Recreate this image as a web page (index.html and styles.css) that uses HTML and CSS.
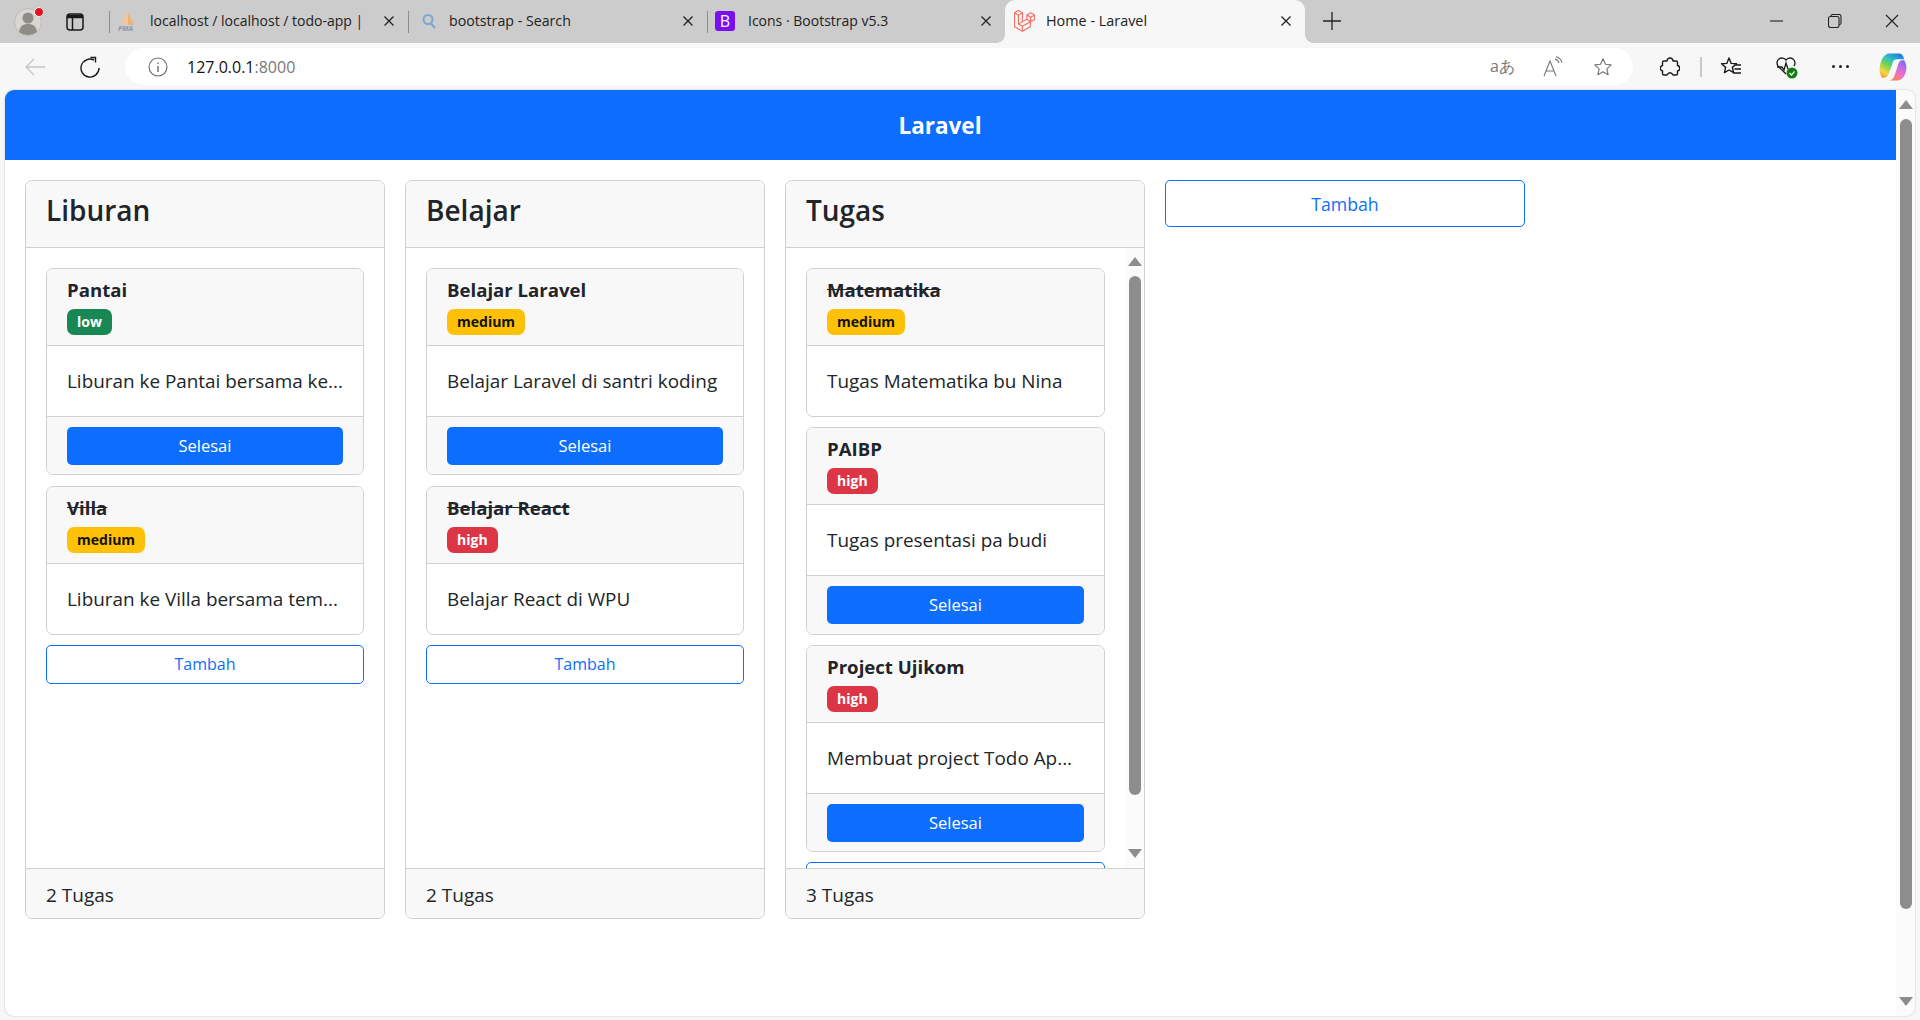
FILE: index.html
```html
<!DOCTYPE html>
<html lang="en">

<head>
  <meta charset="UTF-8" />
  <title>Home - Laravel</title>
  <link rel="stylesheet" href="styles.css">
</head>

<body>
  <div class="tabstrip">
    <div class="profile">
      <svg width="34" height="34" viewBox="0 0 34 34">
        <circle cx="16" cy="17" r="13.500" fill="#d8d6d2" stroke="#bdbbb8" />
        <circle cx="16" cy="13" r="5.500" fill="#8f8c88" />
        <path d="M7 27c1-6 4-8 9-8s8 2 9 8c-5 4-13 4-18 0z" fill="#8f8c88" />
        <circle cx="27" cy="7" r="4.500" fill="#e8101c" stroke="#f2f2f2" />
      </svg>
    </div>
    <div class="tabs-btn">
      <svg width="18" height="18" viewBox="0 0 18 18" fill="none" stroke="#1a1a1a" stroke-width="1.500">
        <rect x="1" y="1" width="16" height="16" rx="3" />
        <path d="M1 3.500h16" stroke-width="3.500" />
        <path d="M6.500 5v12" />
      </svg>
    </div>
    <div class="sep sep-first"></div>
    <div class="tab tab-pma">
      <svg class="favicon" width="20" height="22" viewBox="0 0 20 22">
        <path d="M3 15L9 2l1 13z" fill="#f2c79b" />
        <path d="M10 15V2l6 13z" fill="#f0b27a" />
        <text x="0" y="21" class="pma-mark">PMA</text>
      </svg>
      <span class="tab-title">localhost / localhost / todo-app |</span>
      <svg class="close" width="12" height="12" viewBox="0 0 12 12"><path d="M1.500 1.500l9 9M10.500 1.500l-9 9" stroke="#222" stroke-width="1.300" /></svg>
    </div>
    <div class="sep"></div>
    <div class="tab tab-search">
      <svg class="favicon" width="16" height="16" viewBox="0 0 16 16" fill="none" stroke="#7aa6d6" stroke-width="2">
        <circle cx="7" cy="6.500" r="4.500" />
        <path d="M10 10.500l4 4.500" />
      </svg>
      <span class="tab-title">bootstrap - Search</span>
      <svg class="close" width="12" height="12" viewBox="0 0 12 12"><path d="M1.500 1.500l9 9M10.500 1.500l-9 9" stroke="#222" stroke-width="1.300" /></svg>
    </div>
    <div class="sep"></div>
    <div class="tab tab-icons">
      <span class="bs-icon">B</span>
      <span class="tab-title">Icons · Bootstrap v5.3</span>
      <svg class="close" width="12" height="12" viewBox="0 0 12 12"><path d="M1.500 1.500l9 9M10.500 1.500l-9 9" stroke="#222" stroke-width="1.300" /></svg>
    </div>
    <div class="tab tab-active">
      <svg class="favicon" width="21" height="22" viewBox="0 0 50 52" fill="none" stroke="#f56b60" stroke-width="2.600" stroke-linejoin="round">
        <path d="M1 6.500L10.500 1 20 6.500 10.500 12zM1 6.500v33l18.800 10.800L39 39.500V28" />
        <path d="M10.500 12v21l9.300 5.600L39 28l10-5.700V11.500L39.800 6l-9.200 5.500v10.800l9.200 5.400M30.600 11.500l9.200 5.500L49 11.500M39.800 17v10.700" />
        <path d="M20 6.500v21l10.600-5.500M19.800 38.600v11.700M10.500 33L20 27.500" />
      </svg>
      <span class="tab-title">Home - Laravel</span>
      <svg class="close" width="12" height="12" viewBox="0 0 12 12"><path d="M1.500 1.500l9 9M10.500 1.500l-9 9" stroke="#222" stroke-width="1.300" /></svg>
    </div>
    <div class="new-tab">
      <svg width="18" height="18" viewBox="0 0 18 18"><path d="M9 0v18M0 9h18" stroke="#222" stroke-width="1.300" /></svg>
    </div>
    <div class="window-btns">
      <svg width="14" height="14" viewBox="0 0 14 14"><path d="M0 7h13" stroke="#222" stroke-width="1.100" /></svg>
      <svg width="14" height="14" viewBox="0 0 14 14" fill="none" stroke="#222" stroke-width="1.100"><rect x="0.500" y="2.500" width="10.500" height="11" rx="2" /><path d="M3 2.500v-.5A1.500 1.500 0 0 1 4.500.5H11a2 2 0 0 1 2 2V9a1.500 1.500 0 0 1-1.500 1.500H11" /></svg>
      <svg width="14" height="14" viewBox="0 0 14 14"><path d="M1 1l12 12M13 1L1 13" stroke="#222" stroke-width="1.100" /></svg>
    </div>
  </div>

  <div class="toolbar">
    <svg class="tool-back" width="22" height="20" viewBox="0 0 22 20" fill="none" stroke="#c4c4c4" stroke-width="1.300"><path d="M21 10H2M10 2l-8 8 8 8" /></svg>
    <svg class="tool-reload" width="20" height="22" viewBox="0 0 20 22" fill="none" stroke="#1a1a1a" stroke-width="1.400"><path d="M14 4A9 9 0 1 0 19 12" /><path d="M10.500 1.500H15.500V6.500" /></svg>
    <div class="addressbar">
      <svg width="20" height="20" viewBox="0 0 20 20" fill="none" stroke="#6b6b6b" stroke-width="1.100"><circle cx="10" cy="10" r="9" /><path d="M10 9v6M10 5.500V7" stroke-width="1.400" /></svg>
      <div class="url">127.0.0.1<span class="url-port">:8000</span></div>
      <div class="addr-icons">
        <span class="translate">aあ</span>
        <svg width="20" height="22" viewBox="0 0 20 22" fill="none" stroke="#777" stroke-width="1.100"><path d="M1 20L7 5l6 15M3.500 15h7M12 3c2 .5 3.500 2 4 4M13 .8c3 .7 5 2.700 6 5.700" /></svg>
        <svg width="20" height="22" viewBox="0 0 22 22" fill="none" stroke="#777" stroke-width="1.300"><path d="M11 2l2.700 6 6.300.7-4.700 4.300 1.300 6.500L11 16.200 5.400 19.500 6.700 13 2 8.700 8.300 8z" stroke-linejoin="round" /></svg>
      </div>
    </div>
    <div class="tool-right">
      <svg class="ext" width="20" height="22" viewBox="0 0 20 22" fill="none" stroke="#1a1a1a" stroke-width="1.400"><path d="M7 5c.5-4 5.500-4 6 0h3a1.500 1.500 0 0 1 1.500 1.500V9.500c3 .5 3 5 0 5.500v2.500A1.500 1.500 0 0 1 16 19h-3c-1.500-3-4.500-3-6 0H4a1.500 1.500 0 0 1-1.500-1.500V15c-3-1-3-4.500 0-5.500V6.500A1.500 1.500 0 0 1 4 5z" stroke-linejoin="round" /></svg>
      <div class="tool-sep"></div>
      <svg class="favs" width="22" height="22" viewBox="0 0 22 22" fill="none" stroke="#1a1a1a" stroke-width="1.400"><path d="M9 2l2.200 5.400 5.300.4-4.100 3.600 1.200 5.300L9 14l-4.600 2.700 1.200-5.300L1.500 7.800l5.300-.4zM15 9h6M14.500 13H21M13 17h8" stroke-linejoin="round" /></svg>
      <svg class="health" width="24" height="24" viewBox="0 0 24 24" fill="none" stroke="#1a1a1a" stroke-width="1.300">
        <path d="M11 19l-8-8a5 5 0 0 1 8-6 5 5 0 0 1 8 6" />
        <path d="M2 12h5l2 3 2-7 2 6" />
        <circle cx="17" cy="18" r="5.500" fill="#107c10" stroke="none" />
        <path d="M14.500 18l2 2 3-3.500" stroke="#fff" stroke-width="1.300" />
      </svg>
      <div class="dots"><i></i><i></i><i></i></div>
      <svg class="copilot" width="29" height="30" viewBox="0 0 30 30">
        <defs>
          <linearGradient id="cpLeft" x1="0.800" y1="0" x2="0.200" y2="1">
            <stop offset="0" stop-color="#1e78e8" />
            <stop offset="0.350" stop-color="#2fc4c0" />
            <stop offset="0.550" stop-color="#6cd25a" />
            <stop offset="0.850" stop-color="#f8d93a" />
            <stop offset="1" stop-color="#f59a3c" />
          </linearGradient>
          <linearGradient id="cpRight" x1="0.800" y1="0" x2="0.200" y2="1">
            <stop offset="0" stop-color="#7a6cf0" />
            <stop offset="0.400" stop-color="#d66be0" />
            <stop offset="0.700" stop-color="#f47aa8" />
            <stop offset="1" stop-color="#f5803c" />
          </linearGradient>
        </defs>
        <path d="M11 1h10c2 0 3 1 4 3l1 3h-7c-3 0-4 1-5 4l-4 11c-1 3-3 4-5 4H3C1 22 0 18 1 14 2 8 5 1 11 1z" fill="url(#cpLeft)" />
        <path d="M24 8h2c2 3 3 7 2 11-1 5-4 10-9 10h-9c3 0 5-2 6-5l4-12c.5-2 2-4 4-4z" fill="url(#cpRight)" />
      </svg>
    </div>
  </div>

  <div class="viewport">
    <div class="page">
      <div class="navbar">Laravel</div>
      <div class="board">

        <div class="column">
          <div class="column-head">Liburan</div>
          <div class="column-body">
            <div class="task">
              <div class="task-head">
                <div class="task-title">Pantai</div>
                <span class="badge badge-low">low</span>
              </div>
              <div class="task-body">Liburan ke Pantai bersama ke...</div>
              <div class="task-foot"><div class="btn-done">Selesai</div></div>
            </div>
            <div class="task">
              <div class="task-head">
                <div class="task-title done">Villa</div>
                <span class="badge badge-medium">medium</span>
              </div>
              <div class="task-body">Liburan ke Villa bersama tem...</div>
            </div>
            <div class="btn-add">Tambah</div>
          </div>
          <div class="column-foot">2 Tugas</div>
        </div>

        <div class="column">
          <div class="column-head">Belajar</div>
          <div class="column-body">
            <div class="task">
              <div class="task-head">
                <div class="task-title">Belajar Laravel</div>
                <span class="badge badge-medium">medium</span>
              </div>
              <div class="task-body">Belajar Laravel di santri koding</div>
              <div class="task-foot"><div class="btn-done">Selesai</div></div>
            </div>
            <div class="task">
              <div class="task-head">
                <div class="task-title done">Belajar React</div>
                <span class="badge badge-high">high</span>
              </div>
              <div class="task-body">Belajar React di WPU</div>
            </div>
            <div class="btn-add">Tambah</div>
          </div>
          <div class="column-foot">2 Tugas</div>
        </div>

        <div class="column">
          <div class="column-head">Tugas</div>
          <div class="column-scroll">
            <div class="column-body">
              <div class="task">
                <div class="task-head">
                  <div class="task-title done">Matematika</div>
                  <span class="badge badge-medium">medium</span>
                </div>
                <div class="task-body">Tugas Matematika bu Nina</div>
              </div>
              <div class="task">
                <div class="task-head">
                  <div class="task-title">PAIBP</div>
                  <span class="badge badge-high">high</span>
                </div>
                <div class="task-body">Tugas presentasi pa budi</div>
                <div class="task-foot"><div class="btn-done">Selesai</div></div>
              </div>
              <div class="task">
                <div class="task-head">
                  <div class="task-title">Project Ujikom</div>
                  <span class="badge badge-high">high</span>
                </div>
                <div class="task-body">Membuat project Todo Ap...</div>
                <div class="task-foot"><div class="btn-done">Selesai</div></div>
              </div>
              <div class="btn-add btn-add-clipped"></div>
            </div>
            <div class="scrollbar scrollbar-inner">
              <i class="arrow-up"></i>
              <div class="thumb-track"><div class="thumb"></div></div>
              <i class="arrow-down"></i>
            </div>
          </div>
          <div class="column-foot">3 Tugas</div>
        </div>

        <div class="btn-add btn-add-column">Tambah</div>
      </div>
    </div>
    <div class="scrollbar scrollbar-page">
      <i class="arrow-up"></i>
      <div class="thumb-track"><div class="thumb"></div></div>
      <i class="arrow-down"></i>
    </div>
  </div>
</body>

</html>
```

FILE: styles.css
```css
* {
  box-sizing: border-box;
}

html,
body {
  height: 100%;
}

body {
  margin: 0;
  height: 1020px;
  overflow: hidden;
  display: flex;
  flex-direction: column;
  background-color: #f7f7f7;
  color: #212529;
  font-family: "Open Sans", "Noto Sans", sans-serif;
}

/* Browser tabs */
.tabstrip {
  height: 43px;
  flex-shrink: 0;
  display: flex;
  align-items: center;
  background-color: #cccccc;
  font-size: 14px;
  color: #222;
}

.profile {
  width: 34px;
  margin-left: 12px;
  display: flex;
}

.tabs-btn {
  width: 18px;
  margin-left: 20px;
  display: flex;
}

.sep {
  width: 1px;
  height: 22px;
  background-color: #8e8e8e;
}

.sep-first {
  margin-left: 25px;
}

.tab {
  height: 43px;
  display: flex;
  align-items: center;
  padding: 0 13px 2px 8px;
}

.tab-pma,
.tab-search {
  width: 298px;
}

.tab-search {
  padding-left: 12px;
}

.tab-icons {
  width: 297px;
  padding-left: 7px;
}

.tab-active {
  position: relative;
  width: 300px;
  background-color: #f7f7f7;
  border-radius: 10px 10px 0 0;
  padding-left: 9px;
}

/* concave corners at the foot of the active tab */
.tab-active::before,
.tab-active::after {
  content: "";
  position: absolute;
  bottom: 0;
  width: 8px;
  height: 8px;
}

.tab-active::before {
  left: -8px;
  background: radial-gradient(circle at 0 0, transparent 7.5px, #f7f7f7 8px);
}

.tab-active::after {
  right: -8px;
  background: radial-gradient(circle at 100% 0, transparent 7.5px, #f7f7f7 8px);
}

.favicon {
  flex-shrink: 0;
}

.pma-mark {
  font-size: 7px;
  font-style: italic;
  font-weight: bold;
  fill: #8a93b5;
}

.bs-icon {
  width: 20px;
  height: 20px;
  flex-shrink: 0;
  border-radius: 3px;
  background-color: #7a10f0;
  color: #fff;
  font-size: 16px;
  line-height: 20px;
  text-align: center;
}

.tab-title {
  flex: 1;
  margin-left: 12px;
  white-space: nowrap;
  overflow: hidden;
}

.tab-search .tab-title {
  font-size: 14.200px;
}

.tab-icons .tab-title {
  margin-left: 13px;
}

.tab-active .tab-title {
  margin-left: 11px;
  font-size: 14.400px;
}

.close {
  margin-left: 12px;
  flex-shrink: 0;
}

.new-tab {
  margin-left: 18px;
  padding-bottom: 2px;
  display: flex;
}

.window-btns {
  margin-left: auto;
  width: 150px;
  padding-right: 21px;
  padding-bottom: 2px;
  display: flex;
  justify-content: space-between;
}

/* Browser toolbar */
.toolbar {
  height: 47px;
  flex-shrink: 0;
  display: flex;
  align-items: center;
}

.tool-back {
  margin-left: 24px;
}

.tool-reload {
  margin-left: 34px;
}

.addressbar {
  width: 1508px;
  height: 37px;
  margin-left: 25px;
  padding: 0 20px 0 23px;
  background-color: #fff;
  border-radius: 19px;
  display: flex;
  align-items: center;
}

.url {
  margin-left: 19px;
  font-size: 16px;
  color: #111;
}

.url-port {
  color: #777;
}

.addr-icons {
  margin-left: auto;
  display: flex;
  align-items: center;
  gap: 30px;
}

.translate {
  margin-right: -2px;
  font-size: 16px;
  color: #777;
}

.tool-right {
  display: flex;
  align-items: center;
  margin-left: 27px;
}

.tool-sep {
  width: 2px;
  height: 20px;
  margin-left: 20px;
  background-color: #c8c8c8;
}

.favs {
  margin-left: 18px;
}

.health {
  margin-left: 33px;
}

.dots {
  margin-left: 33px;
  display: flex;
  gap: 4px;
}

.dots i {
  width: 3px;
  height: 3px;
  border-radius: 50%;
  background-color: #222;
}

.copilot {
  margin-left: 30px;
}

/* Page in the window */
.viewport {
  height: 926px;
  margin: 0 5px;
  background-color: #fff;
  border-radius: 9px;
  box-shadow: 0 0 2px rgba(0, 0, 0, 0.25);
  display: flex;
  overflow: hidden;
}

.page {
  flex: 1;
  overflow: hidden;
}

.navbar {
  height: 70px;
  padding-right: 21px;
  background-color: #0d6efd;
  color: #fff;
  font-size: 22.500px;
  font-weight: 700;
  line-height: 72px;
  text-align: center;
}

.board {
  display: flex;
  align-items: flex-start;
  gap: 20px;
  padding: 20px;
}

.column {
  width: 360px;
  height: 739px;
  display: flex;
  flex-direction: column;
  border: 1px solid #d0d0d0;
  border-radius: 7px;
  overflow: hidden;
}

.column-head {
  height: 67px;
  flex-shrink: 0;
  padding-left: 20px;
  background-color: #f8f8f8;
  border-bottom: 1px solid #d0d0d0;
  font-size: 28px;
  font-weight: 600;
  line-height: 59px;
}

.column-body {
  flex: 1;
  min-width: 0;
  display: flex;
  flex-direction: column;
  gap: 10.200px;
  padding: 20px;
  overflow: hidden;
}

.column-scroll {
  flex: 1;
  display: flex;
  min-height: 0;
}

.column-foot {
  height: 50px;
  flex-shrink: 0;
  padding-left: 20px;
  background-color: #f8f8f8;
  border-top: 1px solid #d0d0d0;
  font-size: 19px;
  line-height: 52px;
}

.task {
  flex-shrink: 0;
  border: 1px solid #d0d0d0;
  border-radius: 7px;
  overflow: hidden;
}

.task-head {
  height: 77px;
  padding: 6px 20px 0;
  background-color: #f8f8f8;
  border-bottom: 1px solid #d0d0d0;
}

.task-title {
  height: 30px;
  font-size: 18.600px;
  font-weight: 700;
  line-height: 29px;
}

.task-title.done {
  text-decoration: line-through;
}

.badge {
  display: inline-block;
  height: 26px;
  padding: 0 10px;
  border-radius: 7px;
  margin-top: 4px;
  font-size: 14px;
  font-weight: 700;
  line-height: 26px;
  vertical-align: top;
}

.badge-low {
  background-color: #198754;
  color: #fff;
}

.badge-medium {
  background-color: #ffc107;
  color: #111;
}

.badge-high {
  background-color: #dc3545;
  color: #fff;
}

.task-body {
  height: 70px;
  padding-left: 20px;
  font-size: 18.900px;
  line-height: 71px;
  white-space: nowrap;
  overflow: hidden;
}

.task-foot {
  height: 58.400px;
  padding: 10px 20px 9px;
  background-color: #f8f8f8;
  border-top: 1px solid #d0d0d0;
}

.btn-done {
  height: 38px;
  border-radius: 5px;
  background-color: #0d6efd;
  color: #fff;
  font-size: 16.500px;
  line-height: 38px;
  text-align: center;
}

.btn-add {
  flex-shrink: 0;
  height: 39px;
  border: 1px solid #0d6efd;
  border-radius: 5px;
  background-color: #fff;
  color: #0d6efd;
  font-size: 16px;
  line-height: 37px;
  text-align: center;
}

.btn-add-column {
  width: 360px;
  height: 47px;
  font-size: 17.700px;
  line-height: 46px;
}

/* Scrollbars, drawn because their place is fixed in the picture */
.scrollbar {
  flex-shrink: 0;
  display: flex;
  flex-direction: column;
  align-items: center;
  background-color: #fbfbfb;
}

.scrollbar-inner {
  width: 19px;
  padding: 9px 0 10px;
}

.scrollbar-page {
  width: 19px;
  padding: 10px 0;
}

.thumb-track {
  flex: 1;
  width: 100%;
  display: flex;
  justify-content: center;
  padding: 10px 0;
}

.thumb {
  width: 12px;
  border-radius: 6px;
  background-color: #8d8d8d;
}

.scrollbar-inner .thumb {
  height: 519px;
}

.scrollbar-page .thumb {
  height: 790px;
}

.arrow-up,
.arrow-down {
  width: 0;
  height: 0;
  border-left: 7px solid transparent;
  border-right: 7px solid transparent;
}

.arrow-up {
  border-bottom: 9px solid #8d8d8d;
}

.arrow-down {
  border-top: 9px solid #8d8d8d;
}
```
